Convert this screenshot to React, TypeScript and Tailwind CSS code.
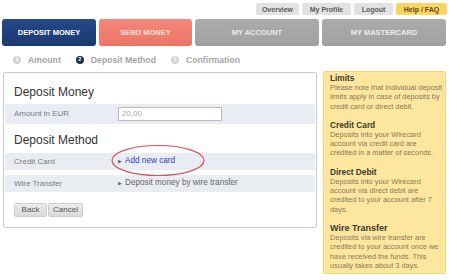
const topLinks = [
  { label: 'Overview', w: 'w-[43px]', cls: 'bg-[#e2e2e2] text-[#5a5a5a]' },
  { label: 'My Profile', w: 'w-[49px]', cls: 'bg-[#e2e2e2] text-[#5a5a5a]' },
  { label: 'Logout', w: 'w-[39px]', cls: 'bg-[#e2e2e2] text-[#5a5a5a]' },
  { label: 'Help / FAQ', w: 'w-[51px]', cls: 'bg-[#fcd462] text-[#5a4a1a]' },
];

const tabs = [
  { label: 'DEPOSIT MONEY', w: 'w-[94px]', cls: 'bg-gradient-to-b from-[#27498a] to-[#1a3a72] text-white' },
  { label: 'SEND MONEY', w: 'w-[93px]', cls: 'bg-gradient-to-b from-[#f3887a] to-[#ec7564] text-[#fde0d8]' },
  { label: 'MY ACCOUNT', w: 'w-[124px]', cls: 'bg-gradient-to-b from-[#acacac] to-[#a0a0a0] text-[#ececec]' },
  { label: 'MY MASTERCARD', w: 'w-[124px]', cls: 'bg-gradient-to-b from-[#acacac] to-[#a0a0a0] text-[#ececec]' },
];

const steps = [
  { n: '1', label: 'Amount', active: false },
  { n: '2', label: 'Deposit Method', active: true },
  { n: '3', label: 'Confirmation', active: false },
];

const info = [
  { title: 'Limits', lines: ['Please note that individual deposit', 'limits apply in case of deposits by', 'credit card or direct debit.'] },
  { title: 'Credit Card', lines: ['Deposits into your Wirecard', 'account via credit card are', 'credited in a matter of seconds.'] },
  { title: 'Direct Debit', lines: ['Deposits into your Wirecard', 'account via direct debit are', 'credited to your account after 7', 'days.'] },
  { title: 'Wire Transfer', lines: ['Deposits via wire transfer are', 'credited to your account once we', 'have received the funds. This', 'usually takes about 3 days.'] },
];

export default function App() {
  return (
    <div className="relative w-[450px] h-[280px] bg-white overflow-hidden font-['Liberation_Sans',Arial,sans-serif]">
      {/* top links */}
      <div className="flex justify-end gap-[3px] pt-[3px] pr-[3px]">
        {topLinks.map((l) => (
          <div key={l.label} className={`${l.w} ${l.cls} h-[12px] rounded-[2px] flex items-center justify-center text-[7px] font-bold leading-none`}>
            {l.label}
          </div>
        ))}
      </div>

      {/* main tabs */}
      <div className="flex gap-[3px] pl-[2px] mt-[4px]">
        {tabs.map((t) => (
          <div key={t.label} className={`${t.w} ${t.cls} h-[27px] rounded-[3px] flex items-center justify-center text-[7.5px] font-bold leading-none`}>
            {t.label}
          </div>
        ))}
      </div>

      {/* steps */}
      <div className="flex items-center pl-[13px] mt-[8px] h-[12px]">
        {steps.map((s) => (
          <div key={s.n} className="flex items-center mr-[15px]">
            <span className={`w-[8px] h-[8px] rounded-full flex items-center justify-center text-[5.5px] font-bold text-white leading-none ${s.active ? 'bg-[#1c2d52]' : 'bg-[#d2d2d2]'}`}>
              {s.n}
            </span>
            <span className="ml-[7px] text-[8.7px] font-bold text-[#a5a5a5] leading-none">{s.label}</span>
          </div>
        ))}
      </div>

      <div className="flex items-start mt-[5px]">
        {/* form panel */}
        <div className="ml-[3px] mt-[1px] w-[314px] border border-[#c5cad6] rounded-[2px] px-[1px] pt-[11px] pb-[10px]">
          <div className="pl-[9px] h-[16px] flex items-center text-[12px] text-[#333]">Deposit Money</div>
          <div className="mt-[4px] h-[20px] bg-[#e9edf3] flex items-center">
            <div className="w-[113px] pl-[9px] text-[8px] text-[#7a7a7a]">Amount in EUR</div>
            <div className="w-[104px] h-[14px] bg-white border border-[#bcbcbc] flex items-center pl-[3px] text-[8px] text-[#a8a8a8]">20.00</div>
          </div>
          <div className="mt-[8px] pl-[9px] h-[16px] flex items-center text-[12px] text-[#333]">Deposit Method</div>
          <div className="mt-[5px] h-[17px] bg-[#e9edf3] flex items-center">
            <div className="w-[113px] pl-[9px] text-[8px] text-[#7a7a7a]">Credit Card</div>
            <span className="text-[5px] text-[#666]">▶</span>
            <span className="ml-[3px] text-[8.2px] text-[#2a3fbf]">Add new card</span>
          </div>
          <div className="mt-[5px] h-[17px] bg-[#e9edf3] flex items-center">
            <div className="w-[113px] pl-[9px] text-[8px] text-[#7a7a7a]">Wire Transfer</div>
            <span className="text-[5px] text-[#666]">▶</span>
            <span className="ml-[3px] text-[8.2px] text-[#666]">Deposit money by wire transfer</span>
          </div>
          <div className="mt-[11px] pl-[9px] flex gap-[1px]">
            <div className="w-[33px] h-[14px] rounded-[2px] bg-gradient-to-b from-[#ececec] to-[#d9d9d9] border border-[#cdcdcd] flex items-center justify-center text-[8px] text-[#555]">Back</div>
            <div className="w-[35px] h-[14px] rounded-[2px] bg-gradient-to-b from-[#ececec] to-[#d9d9d9] border border-[#cdcdcd] flex items-center justify-center text-[8px] text-[#555]">Cancel</div>
          </div>
        </div>

        {/* info sidebar */}
        <div className="ml-[6px] w-[123px] bg-[#fde69e] border border-[#f4d47a] rounded-[2px] pl-[6px] pt-[1px] pb-[3px]">
          {info.map((b, i) => (
            <div key={b.title} className={i < info.length - 1 ? 'mb-[9px]' : ''}>
              <div className={`font-bold text-[#3c3a30] leading-[10px] ${i === 3 ? 'text-[9px]' : 'text-[8.3px]'}`}>{b.title}</div>
              <div className="text-[7.4px] leading-[9.3px] text-[#8a7a58] whitespace-nowrap">
                {b.lines.map((ln) => (
                  <div key={ln}>{ln}</div>
                ))}
              </div>
            </div>
          ))}
        </div>
      </div>

      {/* red highlight ellipse */}
      <svg className="absolute left-[110px] top-[144px]" width="96" height="33" viewBox="0 0 96 33">
        <ellipse cx="48" cy="16.5" rx="46" ry="15" fill="none" stroke="#d9534f" strokeWidth="1.2" />
      </svg>
    </div>
  );
}
